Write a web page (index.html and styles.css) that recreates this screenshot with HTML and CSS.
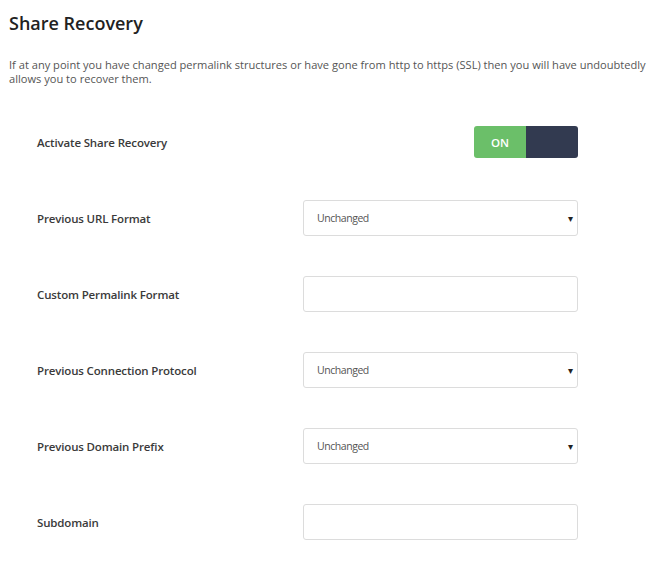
FILE: index.html
```html
<!DOCTYPE html>
<html lang="en">
<head>
<meta charset="utf-8">
<title>Share Recovery</title>
<link rel="stylesheet" href="styles.css">
</head>
<body>
<div class="page">
  <h1 class="title">Share Recovery</h1>
  <p class="intro">If at any point you have changed permalink structures or have gone from http to https (SSL) then you will have undoubtedly<br>allows you to recover them.</p>
  <div class="form">
    <div class="row">
      <div class="label">Activate Share Recovery</div>
      <div class="control control-toggle">
        <div class="toggle"><span class="toggle-on">ON</span><span class="toggle-off"></span></div>
      </div>
    </div>
    <div class="row">
      <div class="label">Previous URL Format</div>
      <div class="control"><div class="select"><span>Unchanged</span><span class="caret">▾</span></div></div>
    </div>
    <div class="row">
      <div class="label">Custom Permalink Format</div>
      <div class="control"><div class="input"></div></div>
    </div>
    <div class="row">
      <div class="label">Previous Connection Protocol</div>
      <div class="control"><div class="select"><span>Unchanged</span><span class="caret">▾</span></div></div>
    </div>
    <div class="row">
      <div class="label">Previous Domain Prefix</div>
      <div class="control"><div class="select"><span>Unchanged</span><span class="caret">▾</span></div></div>
    </div>
    <div class="row">
      <div class="label">Subdomain</div>
      <div class="control"><div class="input"></div></div>
    </div>
  </div>
</div>
</body>
</html>
```
FILE: styles.css
```css
* { box-sizing: border-box; }
html, body { margin: 0; padding: 0; background: #fff; }
body { font-family: "Open Sans", "Liberation Sans", sans-serif; color: #333; overflow: hidden; }
.page { padding: 10px 0 0 9px; width: 650px; }
.title { margin: 0; font-size: 18px; font-weight: 600; line-height: 26px; color: #222; }
.intro { margin: 22px 0 0 0; font-size: 11.1px; letter-spacing: 0; line-height: 14px; color: #555; white-space: nowrap; }
.form { margin-top: 18px; padding-left: 28px; display: flex; flex-direction: column; }
.row { display: flex; align-items: center; height: 76px; }
.label { width: 266px; font-size: 11.5px; letter-spacing: -0.15px; font-weight: 600; color: #3a3a3a; }
.control { width: 275px; display: flex; }
.control-toggle { justify-content: flex-end; }
.toggle { display: flex; width: 104px; height: 32px; border-radius: 3px; overflow: hidden; }
.toggle-on { width: 52px; background: #6bbf69; color: #fff; font-size: 11.5px; font-weight: 600; display: flex; align-items: center; justify-content: center; }
.toggle-off { width: 52px; background: #323a50; }
.select, .input { width: 275px; height: 36px; border: 1px solid #dcdcdc; border-radius: 3px; background: #fff; }
.select { display: flex; align-items: center; justify-content: space-between; padding: 0 4px 0 13px; font-size: 10.5px; letter-spacing: -0.45px; color: #555; }
.caret { font-size: 10px; color: #222; letter-spacing: 0; }
```
